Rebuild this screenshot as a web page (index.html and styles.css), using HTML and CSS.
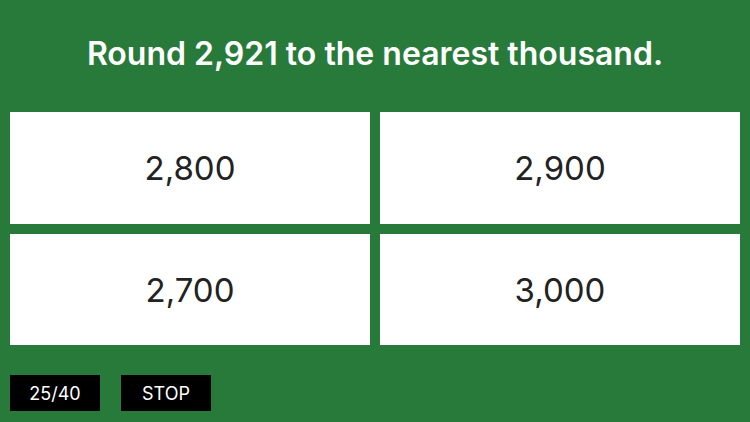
FILE: index.html
```
<!DOCTYPE html>
<html>
<head>
<meta charset="utf-8">
<link rel="stylesheet" href="styles.css">
</head>
<body>
<div class="screen">
  <header class="question">Round 2,921 to the nearest thousand.</header>
  <div class="answers">
    <div class="answer">2,800</div>
    <div class="answer">2,900</div>
    <div class="answer">2,700</div>
    <div class="answer">3,000</div>
  </div>
  <div class="footer">
    <div class="btn">25/40</div>
    <div class="btn">STOP</div>
  </div>
</div>
</body>
</html>
```
FILE: styles.css
```
html, body {
  margin: 0;
  padding: 0;
}
body {
  background: #277a3a;
  width: 750px;
  height: 422px;
  overflow: hidden;
  font-family: Inter, Roboto, "Liberation Sans", sans-serif;
}
.screen {
  display: flex;
  flex-direction: column;
}
.question {
  height: 112px;
  display: flex;
  align-items: center;
  justify-content: center;
  padding-bottom: 6px;
  box-sizing: border-box;
  color: #fff;
  font-size: 32px;
  font-weight: 600;
  letter-spacing: 0;
}
.answers {
  display: grid;
  grid-template-columns: 360px 360px;
  grid-template-rows: 112px 111px;
  gap: 10px;
  padding: 0 10px;
}
.answer {
  background: #fff;
  display: flex;
  align-items: center;
  justify-content: center;
  color: #222;
  font-size: 33px;
  font-weight: 400;
}
.footer {
  display: flex;
  gap: 21px;
  padding: 30px 10px 0;
}
.btn {
  width: 90px;
  height: 36px;
  background: #000;
  color: #fff;
  display: flex;
  align-items: center;
  justify-content: center;
  font-size: 18px;
}
```
